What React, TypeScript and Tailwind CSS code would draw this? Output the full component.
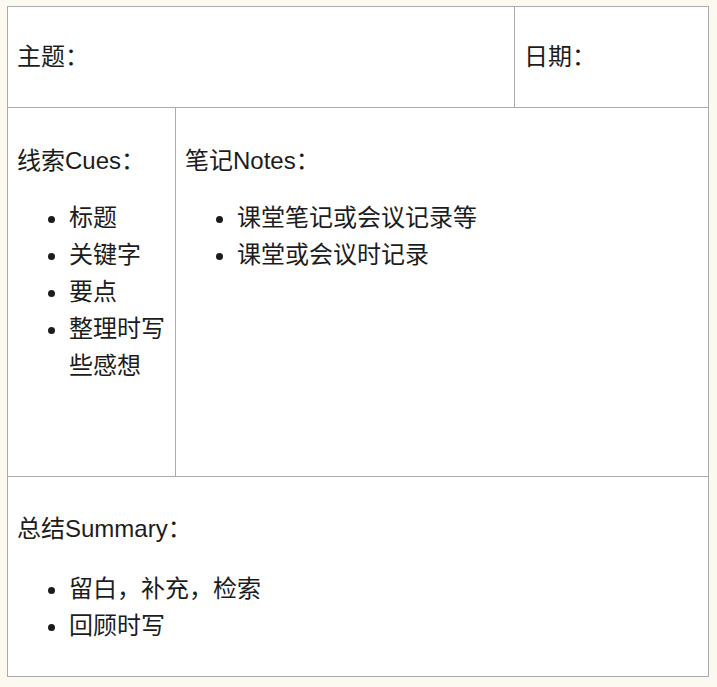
const font = "font-['Liberation_Sans','Noto_Sans_CJK_SC',sans-serif]";

function Bullets({ items }: { items: string[] }) {
  return (
    <ul className="list-disc pl-[52px] leading-[37px]">
      {items.map((item) => (
        <li key={item}>{item}</li>
      ))}
    </ul>
  );
}

export default function App() {
  return (
    <div className={`min-h-[687px] bg-[#fbf9f0] pt-[6px] pl-[7px] text-[24px] text-[#1c1c1c] ${font}`}>
      <div className="w-[702px] border border-[#ababab] bg-white">
        {/* header row */}
        <div className="flex h-[101px] border-b border-[#ababab]">
          <div className="flex w-[507px] items-center border-r border-[#ababab] pl-[9px]">主题：</div>
          <div className="flex flex-1 items-center pl-[9px]">日期：</div>
        </div>

        {/* cues + notes */}
        <div className="flex h-[369px] border-b border-[#ababab]">
          <div className="w-[168px] border-r border-[#ababab] pl-[9px] pr-[8px] pt-[35px]">
            <p className="mb-[20px] leading-[36px]">线索Cues：</p>
            <Bullets items={["标题", "关键字", "要点", "整理时写些感想"]} />
          </div>
          <div className="flex-1 pl-[9px] pt-[35px]">
            <p className="mb-[20px] leading-[36px]">笔记Notes：</p>
            <Bullets items={["课堂笔记或会议记录等", "课堂或会议时记录"]} />
          </div>
        </div>

        {/* summary */}
        <div className="h-[199px] pl-[9px] pt-[34px]">
          <p className="mb-[23px] leading-[36px]">总结Summary：</p>
          <Bullets items={["留白，补充，检索", "回顾时写"]} />
        </div>
      </div>
    </div>
  );
}
